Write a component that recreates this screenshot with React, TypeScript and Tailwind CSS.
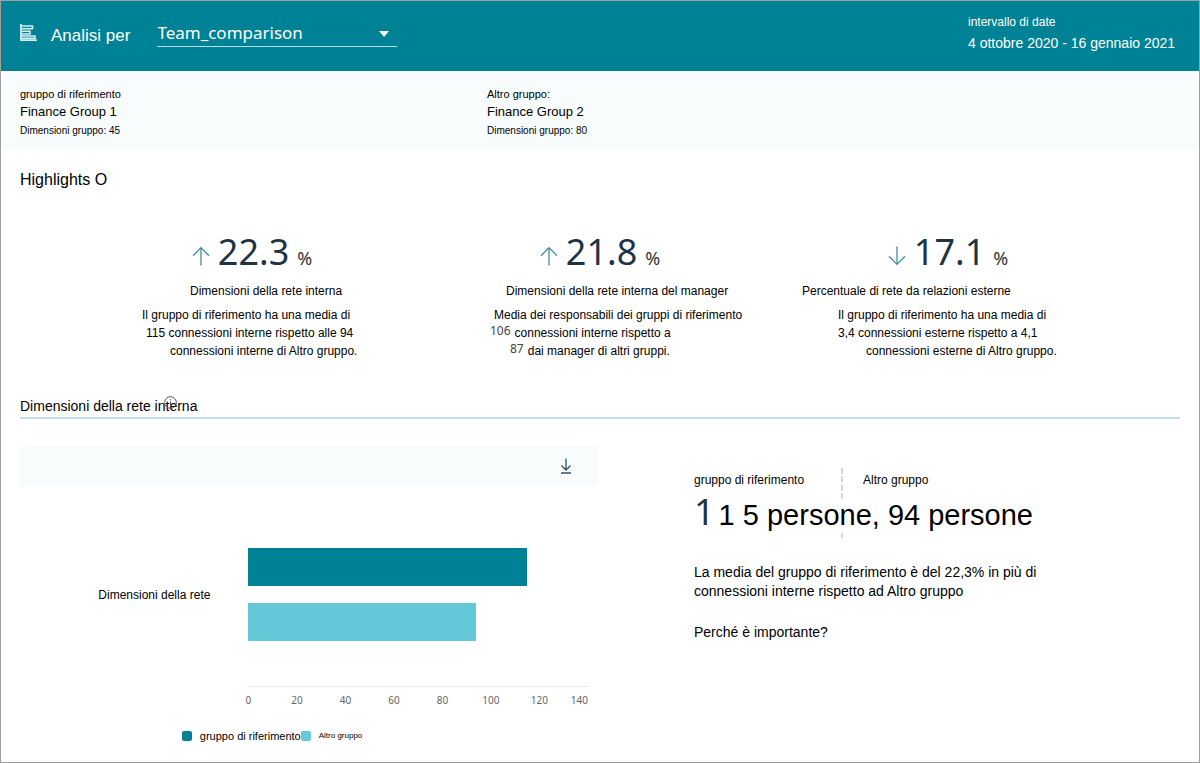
import { clsx } from "clsx";

const SANS = "font-['Liberation_Sans',Arial,sans-serif]";
const UI = "font-['Noto_Sans','Open_Sans',sans-serif]";

interface Line {
  indent: string;
  text: string;
  value?: string;
}

interface Highlight {
  id: string;
  direction: "up" | "down";
  value: string;
  title: Line;
  lines: Line[];
}

const highlights: Highlight[] = [
  {
    id: "internal",
    direction: "up",
    value: "22.3",
    title: { indent: "pl-28", text: "Dimensioni della rete interna" },
    lines: [
      { indent: "pl-16", text: "Il gruppo di riferimento ha una media di" },
      { indent: "pl-17", text: "115 connessioni interne rispetto alle 94" },
      { indent: "pl-23", text: "connessioni interne di Altro gruppo." },
    ],
  },
  {
    id: "manager",
    direction: "up",
    value: "21.8",
    title: { indent: "pl-20", text: "Dimensioni della rete interna del manager" },
    lines: [
      { indent: "pl-17", text: "Media dei responsabili dei gruppi di riferimento" },
      { indent: "pl-16", value: "106", text: "connessioni interne rispetto a" },
      { indent: "pl-21", value: "87", text: "dai manager di altri gruppi." },
    ],
  },
  {
    id: "external",
    direction: "down",
    value: "17.1",
    title: { indent: "pl-7", text: "Percentuale di rete da relazioni esterne" },
    lines: [
      { indent: "pl-16", text: "Il gruppo di riferimento ha una media di" },
      { indent: "pl-16", text: "3,4 connessioni esterne rispetto a 4,1" },
      { indent: "pl-23", text: "connessioni esterne di Altro gruppo." },
    ],
  },
];

const AXIS_MAX = 140;
const ticks = [0, 20, 40, 60, 80, 100, 120, 140];
const bars = [
  { name: "gruppo di riferimento", value: 115, color: "bg-[#008296]" },
  { name: "Altro gruppo", value: 94, color: "bg-[#65c8d8]" },
];

const ReportIcon = () => (
  <svg width="18" height="18" viewBox="0 0 18 18" fill="none" stroke="#d5eef2" aria-hidden="true">
    <path d="M1 0V16.2H17" strokeWidth="1.8" />
    <path d="M2 2H12.5V4.8H2M2 7.2H10V10H2M2 12H15V14.2H2" strokeWidth="1.5" />
  </svg>
);

const TrendArrow: React.FC<{ direction: "up" | "down" }> = ({ direction }) => (
  <svg
    width="18"
    height="20"
    viewBox="0 0 18 20"
    fill="none"
    stroke="#3f8fa3"
    strokeWidth="1.3"
    aria-hidden="true"
    className={clsx(direction === "down" && "rotate-180")}
  >
    <path d="M9 19.5V1.5M1 9.8L9 1.6L17 9.8" />
  </svg>
);

const HighlightCard: React.FC<{ item: Highlight }> = ({ item }) => (
  <article className="whitespace-nowrap text-xs">
    <div className={`flex h-10 items-end justify-center gap-2 text-[#1d3446] ${UI}`}>
      <div className="pb-1.5">
        <TrendArrow direction={item.direction} />
      </div>
      <span className="text-4xl leading-10">{item.value}</span>
      <span className="text-lg leading-7 text-[#333]">%</span>
    </div>
    <h3 className={clsx("mt-[9px] leading-5", item.title.indent)}>{item.title.text}</h3>
    <div className="mt-[5px] leading-[18px]">
      {item.lines.map((line) => (
        <p key={line.text} className={clsx("flex gap-1", line.indent)}>
          {line.value && <span className={`-mt-0.5 text-[#444] ${UI}`}>{line.value}</span>}
          {line.text}
        </p>
      ))}
    </div>
  </article>
);

const Group: React.FC<{ label: string; name: string; size: number }> = ({ label, name, size }) => (
  <div>
    <p className="text-[11px] leading-[18px]">{label}</p>
    <p className="text-[13px] leading-[18px]">{name}</p>
    <p className="text-[10px] leading-5">Dimensioni gruppo: {size}</p>
  </div>
);

const NetworkChart = () => (
  <div>
    <div className="flex h-10 items-center justify-end bg-[#f8fcfd] pr-6">
      <button type="button" aria-label="Scarica" className="flex h-6 w-4 items-center justify-center">
        <svg width="12" height="16" viewBox="0 0 12 16" fill="none" stroke="#2f5264" strokeWidth="1.3">
          <path d="M6 0.5V11.5M1.5 7.5L6 12L10.5 7.5M1 15H11" />
        </svg>
      </button>
    </div>
    <div className="mt-[62px] grid grid-cols-[228fr_339fr_10fr]">
      <p className="self-center pr-[38px] text-right text-xs leading-4 whitespace-nowrap">Dimensioni della rete</p>
      <div className="flex flex-col gap-[17px]">
        {bars.map((bar) => (
          <div
            key={bar.name}
            className={clsx("h-[38px]", bar.color)}
            style={{ width: `${(bar.value / AXIS_MAX) * 100}%` }}
          />
        ))}
      </div>
      <div
        className={`col-start-2 mt-[45px] flex justify-between border-t border-[#e3eaf5] pt-[5px] text-[10px] leading-4 text-[#666] ${UI}`}
      >
        {ticks.map((tick) => (
          <span key={tick} className={clsx("flex w-0", tick === AXIS_MAX ? "justify-end" : "justify-center")}>
            {tick}
          </span>
        ))}
      </div>
    </div>
    <div className="mt-5 flex items-center pl-[28%] leading-4">
      <span className="mr-2 size-2.5 rounded-xs bg-[#008296]" />
      <span className="text-[11px]">gruppo di riferimento</span>
      <span className="mr-2 size-2.5 rounded-xs bg-[#65c8d8]" />
      <span className="text-[8px]">Altro gruppo</span>
    </div>
  </div>
);

const NetworkSummary = () => (
  <div className="pt-[22px] whitespace-nowrap">
    <div className="grid grid-cols-[147px_1fr] text-xs leading-6">
      <span>gruppo di riferimento</span>
      <span className="h-[31px] border-l-2 border-dashed border-[#d6d6d6] pl-5">Altro gruppo</span>
    </div>
    <p className="flex h-[34px] items-baseline gap-1 text-[29px] leading-[26px]">
      <span className={`text-4xl leading-[26px] text-[#1d3446] ${UI}`}>1</span>
      1 5 persone, 94 persone
    </p>
    <div className="ml-[147px] h-[5px] w-0.5 bg-[#d6d6d6]" />
    <p className="mt-[25px] text-sm leading-[19px]">
      La media del gruppo di riferimento è del 22,3% in più di
      <br />
      connessioni interne rispetto ad Altro gruppo
    </p>
    <p className="mt-[22px] text-sm leading-[19px]">Perché è importante?</p>
  </div>
);

export default function App() {
  return (
    <div className={`min-h-screen border border-[#a0a0a0] bg-white text-black ${SANS}`}>
      <header className="flex h-[70px] bg-[#008296] px-[19px] text-white">
        <div className="pt-[23px]">
          <ReportIcon />
        </div>
        <label htmlFor="analysis" className="ml-[13px] pt-[23px] text-[17px] leading-6">
          Analisi per
        </label>
        <div className="relative ml-[27px] w-60 pt-[18px]">
          <select
            id="analysis"
            className={`h-7 w-full appearance-none border-b border-[#b5dde3] bg-transparent text-[17px] leading-7 outline-none ${UI}`}
          >
            <option>Team_comparison</option>
          </select>
          <svg width="10" height="6" viewBox="0 0 10 6" fill="white" className="pointer-events-none absolute top-[30px] right-2">
            <path d="M0 0H10L5 6Z" />
          </svg>
        </div>
        <div className="ml-auto w-53 pt-[11px] whitespace-nowrap">
          <p className="text-xs leading-[21px]">intervallo di date</p>
          <p className="text-sm leading-[21px]">4 ottobre 2020 - 16 gennaio 2021</p>
        </div>
      </header>

      <section className="grid grid-cols-[467fr_693fr] bg-[#f8fcfd] px-[19px] pt-3.5 pb-2">
        <Group label="gruppo di riferimento" name="Finance Group 1" size={45} />
        <Group label="Altro gruppo:" name="Finance Group 2" size={80} />
      </section>

      <section>
        <h2 className="mt-[19px] px-[19px] text-base leading-6">Highlights O</h2>
        <div className="mt-10 grid grid-cols-3 px-[77px]">
          {highlights.map((item) => (
            <HighlightCard key={item.id} item={item} />
          ))}
        </div>
      </section>

      <section className="mt-9 px-[19px] pb-4">
        <div className="border-b-2 border-[#c2dfe6] pb-px">
          <h2 className="relative w-fit text-sm leading-5">
            Dimensioni della rete interna
            <svg
              width="13"
              height="13"
              viewBox="0 0 13 13"
              fill="none"
              stroke="#555"
              className="absolute top-0 right-5"
              aria-hidden="true"
            >
              <circle cx="6.5" cy="6.5" r="5.8" />
              <path d="M6.5 5.5V9.5M6.5 3.2V4.4" />
            </svg>
          </h2>
        </div>
        <div className="mt-[27px] grid grid-cols-[578fr_486fr] gap-24">
          <NetworkChart />
          <NetworkSummary />
        </div>
      </section>
    </div>
  );
}
